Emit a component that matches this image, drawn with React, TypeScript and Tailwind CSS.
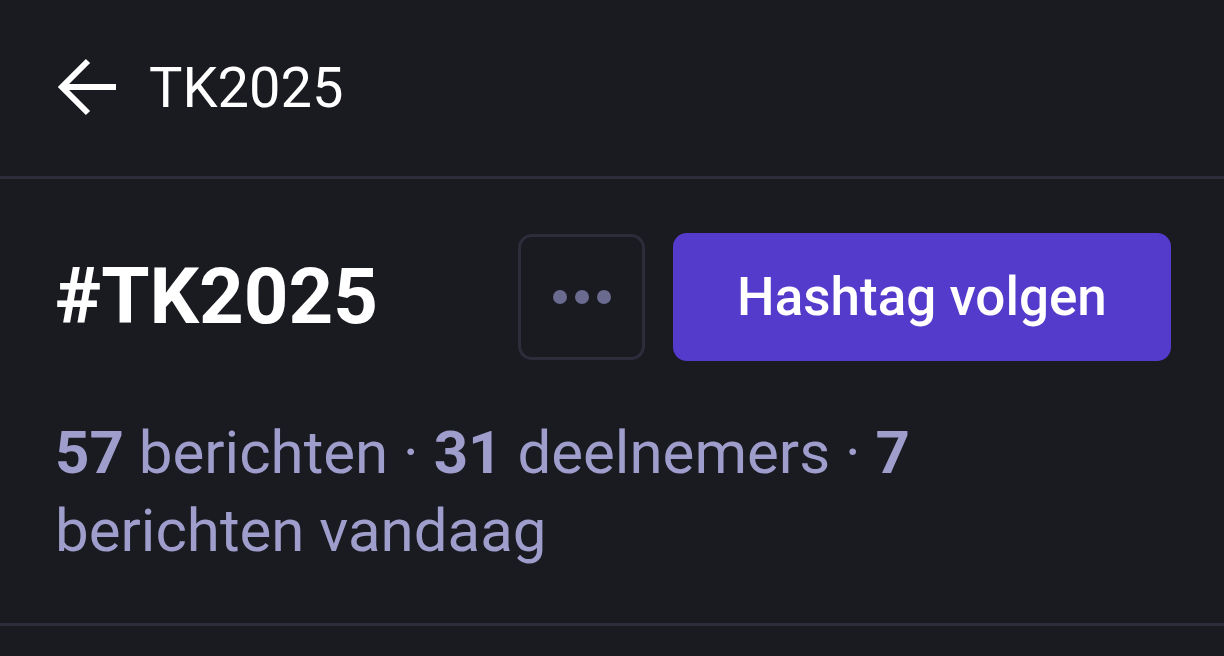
const BackArrow = () => (
  <svg width="60" height="60" viewBox="0 0 60 60" fill="none" className="shrink-0">
    <path d="M58 29H5" stroke="white" strokeWidth="6" />
    <path d="M30 3L4 29L30 55" stroke="white" strokeWidth="6" />
  </svg>
);

const Dots = () => (
  <svg width="58" height="16" viewBox="0 0 58 16" fill="#6b6a8f">
    <circle cx="7" cy="8" r="7" />
    <circle cx="29" cy="8" r="7" />
    <circle cx="51" cy="8" r="7" />
  </svg>
);

const App = () => {
  return (
    <div
      className="w-[1224px] h-[656px] bg-[#1a1a21] text-white overflow-hidden"
      style={{ fontFamily: "Roboto, 'Noto Sans', sans-serif" }}
    >
      {/* Top bar */}
      <div className="h-[179px] flex items-center pl-[58px] gap-[31px] border-b-[3px] border-[#2d2c3b]">
        <BackArrow />
        <span className="text-[56px] leading-none">TK2025</span>
      </div>

      {/* Hashtag header */}
      <div className="pr-[53px] pl-[55px] pt-[54px] pb-[53px] border-b-[3px] border-[#2d2c3b]">
        <div className="flex items-center justify-between">
          <h1 className="text-[78px] font-bold leading-none">#TK2025</h1>
          <div className="flex items-center gap-[28px]">
            <button className="w-[127px] h-[126px] rounded-[14px] border-[3px] border-[#2d2c3b] flex items-center justify-center">
              <Dots />
            </button>
            <button className="w-[498px] h-[128px] rounded-[14px] bg-[#553bcb] text-[53px] font-medium leading-none">
              Hashtag volgen
            </button>
          </div>
        </div>
        <p className="mt-[53px] text-[60px] leading-[78px] text-[#9e9dcb] w-[920px]">
          <span className="font-bold">57</span> berichten · <span className="font-bold">31</span> deelnemers ·{" "}
          <span className="font-bold">7</span> berichten vandaag
        </p>
      </div>
    </div>
  );
};

export default App;
